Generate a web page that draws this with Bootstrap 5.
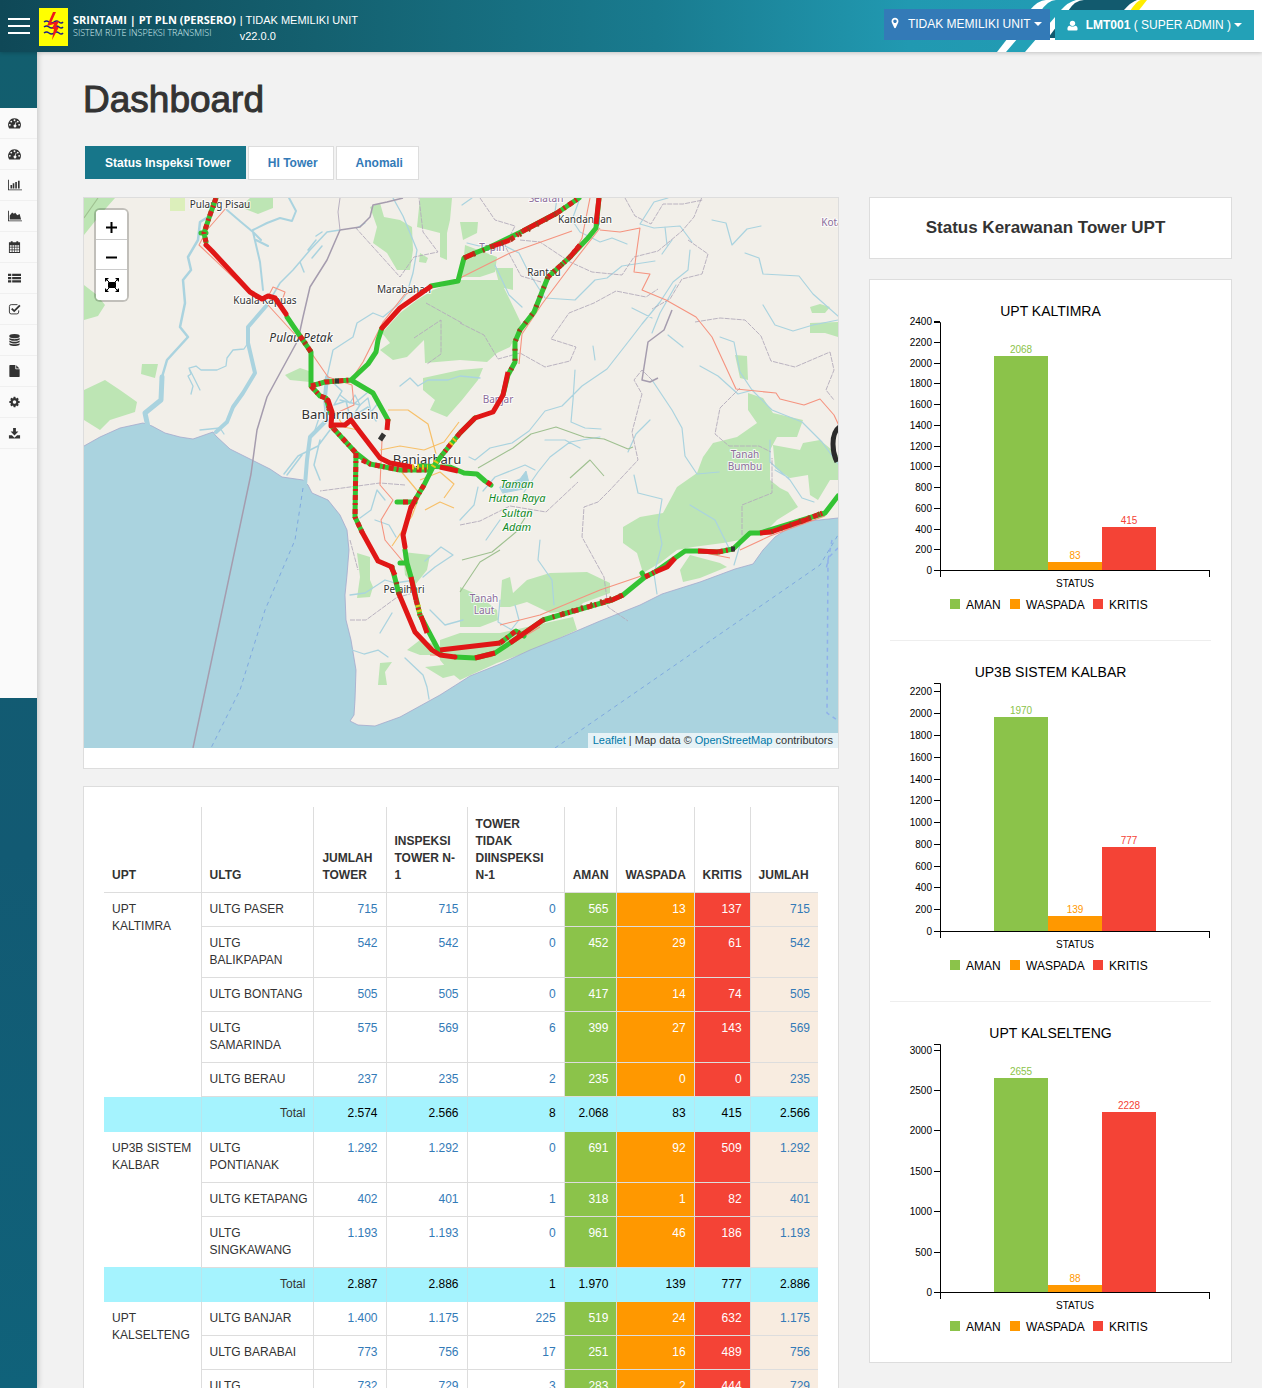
<!DOCTYPE html>
<html lang="id">
<head>
<meta charset="utf-8">
<meta name="viewport" content="width=device-width, initial-scale=1">
<title>Srintami - Dashboard</title>
<link href="https://cdn.jsdelivr.net/npm/bootstrap@5.3.0/dist/css/bootstrap.min.css" rel="stylesheet">
<style>
:root{--aman:#8bc34a;--waspada:#ff9800;--kritis:#f44336;--line:#ddd;--link:#337ab7}
body{font-family:"Liberation Sans",Arial,sans-serif;font-size:12px;line-height:17px;color:#333;background:#f2f2f2}
a{color:var(--link);text-decoration:none}
.topbar{height:52px;background:linear-gradient(90deg,#0f4857 0,#14606f 25%,#197b8f 52%,#2199b1 72%,#239fb7 100%);box-shadow:0 1px 4px #0003;z-index:5}
.swoosh{position:absolute;right:0;top:0;height:52px;width:272px}
.burger{width:22px;height:16px;border:0;background:none;padding:0;display:flex;flex-direction:column;justify-content:space-between}
.burger span{height:2px;background:#fff;display:block}
.brand-logo{margin:2px 5px 0 9px}
.brand-words{padding-top:3px}
.brand-title{font:700 11px/15px "Open Sans",sans-serif;color:#fff}
.brand-sub{font:300 9px/11px "Open Sans",sans-serif;color:#d8f1f5}
.unit-info{font-size:11px;line-height:16px;color:#fff}
.top-btn{border:0;border-radius:0;color:#fff;font-size:12px;line-height:17px}
.top-btn:hover{color:#fff}
.btn-unit{background:#337ab7;padding:0 8px 1px 6px;height:31px;margin:0 5px 3px 0}
.btn-user{background:#23a1b7;padding:0 12px;height:30px;margin-bottom:2px}
.caret{border:4px solid transparent;border-top-color:#fff;border-bottom:0;margin-left:3px}
.shell{height:calc(100vh - 52px)}
.side{width:37px;background:linear-gradient(#125e6e,#125a73 60%,#10627a);padding-top:56px;box-shadow:1px 0 6px #0003;flex:none;z-index:2}
.side ul{background:#fafafa;height:590px}
.side li{height:31px;border-bottom:1px solid #f0f0f0}
.side a{display:flex;align-items:center;padding-left:8px;height:29px}
.side svg{fill:#333}
.content{padding:0 30px 0 46px;overflow-y:auto;scrollbar-width:none}
h1{font-size:37px;line-height:40px;font-weight:400;-webkit-text-stroke:1px #333;margin:28px 0 26px}
.tab-list{gap:2px;padding-left:2px;margin-bottom:17px}
.tab-list a{background:#fff;border:1px solid var(--line);font-weight:700;padding:8px 15px 7px 19px}
.tab-list a.active{background:#17768a;border-color:#17768a;color:#fff;height:33px;padding-right:14px}
.split{--bs-gutter-x:30px}
.panel{background:#fff;border:1px solid var(--line)}
.map-panel{padding-bottom:20px;margin-bottom:17px}
.map-box{height:550px;position:relative;overflow:hidden}
.map-box>svg{width:100%;height:100%;display:block}
.map-tools{position:absolute;left:12px;top:12px;width:31px;border-radius:4px;box-shadow:0 0 0 2px #0003;overflow:hidden;background:#fff}
.map-tools button{height:30px;border:0;border-bottom:1px solid #ccc;background:#fff;width:100%;padding:5px 0 0;display:flex;align-items:center;justify-content:center}
.map-tools button:last-child{border:0;padding:0}
.credit{position:absolute;right:0;bottom:0;background:#ffffffb3;padding:0 5px;font-size:11px;line-height:15px}
.credit a{color:#0078a8}
.m{font-family:"Noto Sans",sans-serif;text-anchor:middle;fill:#333;font-size:10px;paint-order:stroke;stroke:#fffc;stroke-width:2px}
.m .city{font-size:13px}.m .reg{fill:#8b6d9b}.m .park{fill:#138a27;font-style:italic;font-size:11px}
.data-panel{padding:20px}
.data-table{width:100%;table-layout:fixed}
.data-table th,.data-table td{padding:8px;border:0 solid var(--line);border-width:0 0 1px 1px;vertical-align:top}
.data-table th{vertical-align:bottom;padding-top:9px}
.data-table tr>:first-child.upt,.data-table th:first-child{border-left:0}
.data-table td{text-align:right}
.data-table td.nm,.data-table .upt{text-align:left;padding-right:4px}
.data-table td.upt{border-bottom:0}
.ca{background:var(--aman)}.cw{background:var(--waspada)}.ck{background:var(--kritis)}.cj{background:#f8ece0}
.ca a,.cw a,.ck a{color:#fff}
.sum td{background:#a5f3fe;height:35px;color:#000}
.data-table .sum td{border-left-color:#b9e6ee;border-bottom:0}
.sum td:nth-child(2){color:#333}
.kw-title{font-size:17px;line-height:20px;font-weight:700;padding:20px 10px 20px 0;margin:0 0 20px;text-align:center}
.chart-panel{padding:20px;margin-bottom:25px}
.chart-panel svg{display:block;width:100%;height:auto}
.chart-panel hr{margin:20px 0;border-color:#bbb}
.chart-panel text{font-family:"Liberation Sans",Arial,sans-serif;font-size:10px}
.chart-panel .t{font-size:14px}.chart-panel .l{font-size:12px}
</style>
<script src="https://cdn.jsdelivr.net/npm/bootstrap@5.3.0/dist/js/bootstrap.bundle.min.js"></script>
</head>
<body class="overflow-hidden">
<svg width="0" height="0" class="position-absolute">
<symbol id="i-dash" viewBox="0 0 14 14"><path fill-rule="evenodd" d="M7 2a7 7 0 0 0-5.9 10.600q.2.4.7.4h10.400q.5 0 .7-.4A7 7 0 0 0 7 2zM7 3a1 1 0 1 1 0 2 1 1 0 0 1 0-2zM3.500 4.500a1 1 0 1 1 0 2 1 1 0 0 1 0-2zM2 8a1 1 0 1 1 0 2 1 1 0 0 1 0-2zM12 8a1 1 0 1 1 0 2 1 1 0 0 1 0-2zM10.500 4.500a1 1 0 1 1 0 2 1 1 0 0 1 0-2zM8.400 5.600l.7.2-.8 3a1.500 1.500 0 1 1-.8-.2z"/></symbol>
<symbol id="i-bar" viewBox="0 0 2048 1792"><path d="M600 896v512h-240v-512zM930 640v768h-240V640zM2048 1536v128H0V128h128v1408zM1300 448v960h-240V448zM1700 256v1152h-240V256z"/></symbol>
<symbol id="i-area" viewBox="0 0 2048 1792"><path d="M2048 1536v128H0V128h128v1408zM1700 600l220 808H256V832l350-450 250 200 200-150 300 350z"/></symbol>
<symbol id="i-cal" viewBox="0 0 14 14"><path fill-rule="evenodd" d="M1 2h2V.8h2V2h4V.8h2V2h2v11.500H1zM2 5v1.800h2V5zm2.800 0v1.800h1.900V5zm2.600 0v1.800h2V5zm2.600 0v1.800h2V5zM2 7.600v2h2v-2zm2.800 0v2h1.900v-2zm2.600 0v2h2v-2zm2.600 0v2h2v-2zM2 10.400v2h2v-2zm2.800 0v2h1.900v-2zm2.600 0v2h2v-2zm2.600 0v2h2v-2z"/></symbol>
<symbol id="i-list" viewBox="0 0 14 14"><path d="M0 2.500h3.500v2.400H0zM4.500 2.500H14v2.400H4.500zM0 6h3.500v2.400H0zM4.500 6H14v2.400H4.500zM0 9.500h3.500v2.400H0zM4.500 9.500H14v2.400H4.500z"/></symbol>
<symbol id="i-check" viewBox="0 0 14 14"><path d="M11.500 8.500v1.800a2 2 0 0 1-2 2h-6a2 2 0 0 1-2-2v-6a2 2 0 0 1 2-2h6.700" fill="none" stroke="#333"/><path d="M4 6.500l2.700 2.700L12.800 3" fill="none" stroke="#333" stroke-width="2"/></symbol>
<symbol id="i-db" viewBox="0 0 1792 1792"><path d="M896 768q237 0 443-43t325-127v170q0 69-103 128t-280 93.500-385 34.500-385-34.500-280-93.500-103-128v-170q119 84 325 127t443 43zm0 768q237 0 443-43t325-127v170q0 69-103 128t-280 93.500-385 34.500-385-34.500-280-93.500-103-128v-170q119 84 325 127t443 43zm0-384q237 0 443-43t325-127v170q0 69-103 128t-280 93.500-385 34.500-385-34.500-280-93.500-103-128v-170q119 84 325 127t443 43zm0-1152q208 0 385 34.500t280 93.500 103 128v128q0 69-103 128t-280 93.500-385 34.500-385-34.500-280-93.500-103-128v-128q0-69 103-128t280-93.500 385-34.500z"/></symbol>
<symbol id="i-file" viewBox="0 0 1792 1792"><path d="M1152 512v-472q22 14 36 28l408 408q14 14 28 36h-472zm-128 32q0 40 28 68t68 28h544v1056q0 40-28 68t-68 28h-1344q-40 0-68-28t-28-68v-1600q0-40 28-68t68-28h800v544z"/></symbol>
<symbol id="i-gear" viewBox="0 0 1792 1792"><path d="M1152 896q0-106-75-181t-181-75-181 75-75 181 75 181 181 75 181-75 75-181zm512-109v222q0 12-8 23t-20 13l-185 28q-19 54-39 91 35 50 107 138 10 12 10 25t-9 23q-27 37-99 108t-94 71q-12 0-26-9l-138-108q-44 23-91 38-16 136-29 186-7 28-36 28h-222q-14 0-24.500-8.500t-11.500-21.500l-28-184q-49-16-90-37l-141 107q-10 9-25 9-14 0-25-11-126-114-165-168-7-10-7-23 0-12 8-23 15-21 51-66.500t54-70.500q-27-50-41-99l-183-27q-13-2-21-12.500t-8-23.500v-222q0-12 8-23t19-13l186-28q14-46 39-92-40-57-107-138-10-12-10-24 0-10 9-23 26-36 98.500-107.500t94.500-71.500q13 0 26 10l138 107q44-23 91-38 16-136 29-186 7-28 36-28h222q14 0 24.500 8.500t11.500 21.500l28 184q49 16 90 37l142-107q9-9 24-9 13 0 25 10 129 119 165 170 7 8 7 22 0 12-8 23-15 21-51 66.500t-54 70.500q26 50 41 98l183 28q13 2 21 12.500t8 23.500z"/></symbol>
<symbol id="i-down" viewBox="0 0 14 14"><path d="M5.500 1.500h3v4h2.700L7 9.700 2.800 5.500h2.700zM1 9.500h3.200L7 12l2.800-2.500H13v3.300H1z"/></symbol>
<symbol id="i-pin" viewBox="0 0 1792 1792"><path d="M1152 640q0-106-75-181t-181-75-181 75-75 181 75 181 181 75 181-75 75-181zm256 0q0 109-33 179l-364 774q-16 33-47.500 52t-67.500 19-67.500-19-46.500-52l-365-774q-33-70-33-179 0-212 150-362t362-150 362 150 150 362z"/></symbol>
<symbol id="i-user" viewBox="0 0 14 14"><circle cx="7" cy="4.200" r="3.400"/><path d="M2 13.500q-1.500 0-1.500-2 0-4 3-4.300Q7 9.500 10.500 7.200q3 .3 3 4.300 0 2-1.500 2z"/></symbol>
</svg>

<header class="topbar position-relative d-flex align-items-center">
  <svg class="swoosh" viewBox="990 0 272 52">
    <path fill="#fff" d="M997 52L1029 11Q1038 0 1046 0H1262V52z"/>
    <path fill="#23a1b7" d="M1006 52L1040 12Q1048 0 1056 0H1076Q1068 2 1061 10L1025 52z"/>
    <path fill="#125a6e" d="M1048 38L1068 11Q1075 0 1084 0H1137Q1131 2 1124 10L1100 38z"/>
    <path fill="#ffed00" d="M1128 14Q1137 0 1141 0H1147L1136 14z"/>
  </svg>
  <div class="d-flex align-items-center position-relative w-100 ps-2">
    <button class="burger" aria-label="Menu"><span></span><span></span><span></span></button>
    <svg class="brand-logo" width="29" height="38" viewBox="0 0 29 38">
      <path fill="#ff0" d="M0 0h29v38H0z"/>
      <g fill="none" stroke="#1b1f8a" stroke-width="1.500"><path d="M5 14q2.500-2 5 0t5 0 5 0 4 0M5 19q2.500-2 5 0t5 0 5 0 4 0M5 25q2.500-2 5 0t5 0 5 0 4 0"/></g>
      <path fill="#f01818" d="M14 4h3l-5 11 8-2-3 6h3l-7 13 2-11h-2l2-5-7 2z"/>
    </svg>
    <div class="me-auto d-flex brand-words">
      <div><div class="brand-title">SRINTAMI | PT PLN (PERSERO)</div><div class="brand-sub">SISTEM RUTE INSPEKSI TRANSMISI</div></div>
      <div class="unit-info ps-1">| TIDAK MEMILIKI UNIT<br>v22.0.0</div>
    </div>
    <button class="btn top-btn btn-unit d-flex align-items-center"><svg width="10" height="14" viewBox="3 0 8 14" fill="#fff" class="me-2"><use href="#i-pin" width="14" height="12"/></svg>TIDAK MEMILIKI UNIT<span class="caret"></span></button>
    <button class="btn top-btn btn-user d-flex align-items-center me-2"><svg width="11" height="11" fill="#fff" class="me-1"><use href="#i-user"/></svg><span class="ms-1"><b>LMT001</b> ( SUPER ADMIN )</span><span class="caret"></span></button>
  </div>
</header>

<div class="shell d-flex">
<nav class="side" aria-label="Menu utama">
  <ul class="list-unstyled m-0">
    <li><a href="#" aria-label="Dashboard"><svg width="13" height="14"><use href="#i-dash"/></svg></a></li>
    <li><a href="#" aria-label="Dashboard 2"><svg width="13" height="14"><use href="#i-dash"/></svg></a></li>
    <li><a href="#" aria-label="Grafik"><svg width="14" height="14"><use href="#i-bar"/></svg></a></li>
    <li><a href="#" aria-label="Area"><svg width="14" height="14"><use href="#i-area"/></svg></a></li>
    <li><a href="#" aria-label="Jadwal"><svg width="13" height="14"><use href="#i-cal"/></svg></a></li>
    <li><a href="#" aria-label="Daftar"><svg width="13" height="14"><use href="#i-list"/></svg></a></li>
    <li><a href="#" aria-label="Persetujuan"><svg width="13" height="14"><use href="#i-check"/></svg></a></li>
    <li><a href="#" aria-label="Data"><svg width="13" height="12"><use href="#i-db"/></svg></a></li>
    <li><a href="#" aria-label="Berkas"><svg width="13" height="12"><use href="#i-file"/></svg></a></li>
    <li><a href="#" aria-label="Pengaturan"><svg width="13" height="12"><use href="#i-gear"/></svg></a></li>
    <li><a href="#" aria-label="Unduh"><svg width="13" height="14"><use href="#i-down"/></svg></a></li>
  </ul>
</nav>
<main class="content flex-grow-1">
  <h1>Dashboard</h1>
  <nav class="tab-list d-flex align-items-start"><a class="active" href="#">Status Inspeksi Tower</a><a href="#">HI Tower</a><a href="#">Anomali</a></nav>
  <div class="row split">
  <div class="col-8">
    <section class="panel map-panel"><div class="map-box">
<svg viewBox="84 198 754 550" preserveAspectRatio="xMidYMid slice" fill="none" stroke-linejoin="round">
<path fill="#f2efe9" d="M84 198h754v550H84z"/>
<g fill="#bde5b4">
<path d="M84 198h31l-15 17-16 20zM84 285l13 10 8 10-7 11-14 4zM250 198h23v10l-15 6-18-7zM142 364h16l-3 14-14-4zM84 390l21-10 15 10 17 12-2 10-25 8-10 10-16-10zM285 375l15-7 12 4-2 10-20-2zM370 207l10-4 4 14 16 3 12 7 1 23-3 20h-13l-10-17-14-10 4-16zM420 198h32l-2 22-3 13v27l-7-3v-24l-23-6zM420 253l8 5-2 5-7-1z"/>
<path d="M417 300l16-10 27-10h40l10 20 11 23-4 10-7 14-13 6-10 9-27-2-35 3-1-23-17 17-14 3-13-10 10-7-8-10 18-20zM465 245l32 12-2 15-15 5h-18zM495 268h18v22l-13-3zM460 222h18l-1 11-14 7zM423 378l37-8 23-2-5 12-16 20-15 17-17-7 5-10-12-10z"/>
<path d="M748 393l15 5 10 15 30 7-6 17h-20l-7 13v30l10 8 8 4 10 15-21 13-10 10-27 10-17 3-30 4-16 3-17 13-17 10-6-20-14-10v-16l17-10 23-4 14-26 20-14 6-16 10-14 24-6 20-14-9-13z"/>
<path d="M773 445l27 5 3-7 17-3 18 15v25l-8 0-12 20-8-5-2-20-18 3-15-10zM735 355l12 1 1 24-8-2zM810 307l10-3 10 3-5 6h-13zM810 323l28-1v15l-13-4h-15z"/>
<path d="M502 580l8-3 3 16 14-13 23-7 37-1 23 11v10l-27 10-6 7-27 3-23-11-17 5h-10zM460 587l18 8 19 15 1 10-18 7h-20zM440 640l20-7h40l27-6 46-10 4 13-44 20-36 13-37 17-10-8-10-12zM407 650l13-10 17 5 3 10h-20zM425 667l18-2 14-3-2 13-12 3zM357 553l13 4v23l3 7-3 10-13 1 3-21zM403 552l27 3-3 15-12 15-10-10zM380 663l12-1-7 10 2 13h-9zM690 555l30 8 7 4-27 11-17 4-3-12z"/></g>
<path fill="#dcefbb" d="M170 198h15v13h-15z"/>
<path fill="#aad3df" stroke="#a4a8cc" stroke-width=".8" d="M80 448l4-2 16-9 20-9 23-5 9 3 13 7 15 4 13 2 20-7 3 4 14 13 20 10 20 10 12 8 21 3 5 5 4 8 16 7 12 15 7 15 2 20-2 25-2 20 1 25 5 20 5 30-1 30-1 15-4 6 8 4 17 1 25-9 20-11 20-11 19-12 11-7 30-12 30-14 30-12 40-17 40-16 22-11 38-12 35-13 18-5 10-14 12-13 15-10 20-6 28-3 4 0V752H80z"/>
<g stroke="#aad3df" stroke-linecap="round">
<path stroke-width="2.500" d="M208 217l-8 5-2 18-10 17 3 13-8 10 2 23-5 24 8 10-21 23-5 17"/><path stroke-width="5" d="M162 377l-1 23-16 13 3 14"/>
<path stroke-width="4" d="M267 305l-19 22v16l7 30-12 20-10 14-6 15-11 10"/><path stroke-width="2" d="M263 290l-3-28-7-30-12-10-14-12M253 230l14-7 13-5 12 3 4-10-8-15M253 232l8 8M256 240l12 6"/><path stroke-width="1.500" d="M340 230l-13 2-17 18-17 20-13 13-13 22M308 250l8-10M312 258l10-12M300 262l4 10M316 236l6-4"/>
<path stroke-width="1.300" d="M248 343l-4 6-11 1-6 8-1 8-9 4-16 0-5-4-7 2 2 6-3 2 5 10-2 8M327 377l6-27 20-13 4-14 16-10 10 4 17-14 7-10 6-20 4-23-14-34-10-18M357 228l8-5M400 386l10-8 8 8 10-6 20 0 12-4 20 2"/>
<path stroke-width="4" d="M327 377l-2 20 2 23-17 17-3 23-2 25"/>
<path stroke-width="1.500" d="M327 377l15 14-8 14 12-4 4 16M340 400l20 5-8 12 16-10 8 14M355 403l12-10M330 430l-12 16-20 10-14 18M320 440l-6 25 6 15M302 455l-15 20"/>
<path stroke-width="1.300" d="M340 395l10 8 5-8 5 10 8-7 3 14 8-10M385 500l-8-10-6 20-11 8M375 520l14 5 7 12M350 595l15-2 20-13 10 3 20-3M423 577l12-10 18-12-12-8-16 14M352 650l12 4 14-4 10 7M405 658l18 17 4 12 2 12M392 613l-12 20M430 610l15 15 18-5M320 415l-5 15M190 370l10 20M200 430l20-2 4 6"/>
<path stroke-width="1.200" d="M495 265l14 30 13 12M462 205l10-7M467 243l12 3 20-3 20 10 10 20 16 25 30 2 20-20 12-2 15-12 20-3 13-2M557 198l-2 14M580 198l-8 22 8 12 20 10 12-4 15 6M640 224l14-22 14-4M640 224l14 4 26-2 12 16M665 227l2 18M712 220l14 3 6 22 15-16 14-3M745 253l14 5 4 16 36 2 14 18 25 22M838 320l-25 5-20 6-18-6-12-20M690 250l-2 20-15 12-13 20-18 22-10 13-25 32-25 17-20 20-17 5-16 20-17 12-22 5-15 12-6-3M575 370l-2 30-2 22 14 6 16 1M595 360l-2-14M632 308l20 10M672 240l-10 14M676 285l-16 28-8 20M668 335l15 12M652 380l20 30 10 18 3 28 12 18 22-2M650 420l-14 14-8 18M700 366l18 10 20 18 15-4M720 337l14 5 6 30 12 18 20 20 30 12 20 20 16 22"/>
<path stroke-width="1.200" d="M600 437l-30 5-20 15-12 15-14 20M545 440l20 0 15 8M535 470l-10-5-30 12-12 14M634 475l4 18 24 6-4 25 4 20-8 30 3 20M690 505l25 15 14 28M740 545l-6 20M540 540l-2 20 14 20 2 25M500 600l-2 22 14 8M515 605l4 15-8 10M770 440l0 22 20 18 12 18 12 4M460 520l14-15 4-18M500 520l-14 20M775 470l14 8"/>
<path fill="#aad3df" d="M500 487l20-8 6-8 3 12-6 6-20 4z"/></g>
<g stroke="#b3acbb" stroke-width=".9" stroke-dasharray="5 1"><path d="M355 227l45 50 14-20 24-5-15-20-4-34M414 338l12-8 15-10v34l-14 10M426 303l36 20M460 323l24 12 14 24 22-6 25 14 25-6 6-14-25-8 18-26 25-10 22-12 30 6 12-8M480 198l15 22 20 6-10 20 16 30 20 6M520 240l20 2 30 20 22 10 30 3 12-18 24-6 24-20 12-14 14-35M625 198l10 18 16 8 12-20 20 0 20-4M688 240l20 14-6 20-20 5-12 20-18 10M695 322l25-4 25 2 16 16 10 25 24 6 35-15 4 18-8 20 8 10M740 388l-20 20-5 26 14 12 30 0 12 6M652 380l-10-10-8 10 8 14-10 38 6 28-28 30-12 12-14 5-2 30 22 40 4 30 20 14M742 535l0-30 30-12 0-35M460 525l20-4 30-15 36 6 32-30M405 485l-25-2-60 8M350 620l16 0 30-22 20-6M350 540l8 30"/></g>
<path stroke="#a59cae" stroke-width="1.500" d="M403 198l-16 4-14 3-3 12-10 10-20 3-13 30-17 27-7 30-5 23-18 33-13 24-10 33-6 44-58 274M672 310l-8 20-16 12-6 38 8 2 8-4"/>
<path stroke="#b9b0c0" d="M340 230l-2-18 2-14"/>
<g stroke="#9fc090" stroke-width="1.100"><path d="M84 218l14-20M478 468l35-20 18-14 25-7 28 10 20 2 24 10 5-2M570 478l20-18 14 16M462 560l30-8 24-20 14-22M460 592l20-30 20-12"/></g>
<g stroke="#f5937f" stroke-width="1.100"><path d="M233 200l-26 30-8 15 55 52 14 0 5-10 12 5-4 12M268 305l42 46 18 26 24 8 2 20-22 10M351 380l12-18 20-40 22-28 30-7 25-9 50-25 62-22M600 230l20 2 20-4-4 28-2 16 16 2-8 16 24 10 30 17 16 20 12 26 12 26 40 4 4 6 24 6 16-6 14 16 12 26M600 228l-28 36-30 40-20 30-3 30M382 440l-2 45 13 15-12 20 4 20 20 24 6 20 10 30M500 625l40-10 60-25 50-17 40-23 40 8M740 550l30-14 55-20M430 655l60 2 50-30M590 198l-8 40-12 22"/></g>
<g stroke="#f7c06a" stroke-width="1.200"><path d="M330 405l14 22 14 3M388 410l20 0 20 14 8 30M380 450l20-4 24 4 20-8 15-20M400 470l20 24-8 22-20 30M425 510l15-8 14 6M420 480l20-8 14 12-10 14"/></g>
<g stroke="#7fa9e0" stroke-dasharray="4 4"><path d="M303 488l-8 52-30 70-25 80-29 58M555 748l265-183 18-30"/><path stroke-width="1.500" stroke="#8fb0ea" d="M838 548l-10 10-1 155 10 7M832 540l-6 30"/></g>
<g class="m"><text x="220" y="208">Pulang Pisau</text><text x="265" y="304">Kuala Kapuas</text><text x="404" y="293">Marabahan</text><text x="544" y="276">Rantau</text><text x="585" y="223">Kandangan</text><text class="reg" x="546" y="202">Selatan</text><text class="reg" x="492" y="251">Tapin</text><text class="reg" x="498" y="403">Banjar</text><text x="404" y="593">Pelaihari</text><text class="reg" x="745" y="458">Tanah</text><text class="reg" x="745" y="470">Bumbu</text><text class="reg" x="484" y="602">Tanah</text><text class="reg" x="484" y="614">Laut</text><text class="reg" x="832" y="226">Kota</text>
<text x="301" y="342" font-style="italic" style="font-size:12px">Pulau Petak</text><text class="city" x="340" y="419">Banjarmasin</text><text class="city" x="427" y="464">Banjarbaru</text>
<text class="park" x="517" y="488">Taman</text><text class="park" x="517" y="502">Hutan Raya</text><text class="park" x="517" y="517">Sultan</text><text class="park" x="517" y="531">Adam</text></g>
<g stroke-width="5">
<g stroke="#34c334" stroke-linecap="round"><path d="M216 198l-6 17-6 18 2 9M201 233h5M287 317l13 19 11 16v34l14-4 26-2M311 386l9 10 6 2 5 16M351 380l17-16 8-12 2-12 4-12M431 286l27-5 6-23 11-5 15-6 33-16 34-18 22-15M351 380l22 13 15 27M599 198l-3 30-8 10-18 19-22 20-8 20-6 15-14 18-5 12v20l-7 13-5 20M475 418l-15 15-18 22-9 12-9 18-9 15M333 428l23 25 14 11 30 6 30 0M420 466l30 1 14 6 13 1 8 7 6 4M356 453l-1 64 7 15M392 567l7 27M455 657l20 1 20-5 15-10 33-23 17-5 52-15 11-5 22-18 10-5 20-14 10-7 13 0 20 1 15-3 17-16h10l65-20 13-17M644 576l-2-3M405 550l2 13 4 14 9 38 20 38M400 563h6M500 643l16-12 8 5M397 502h18"/></g>
<g stroke="#e01616"><path stroke-linecap="round" d="M206 245l6 6 38 41 12 7 6-3 7 2 11 16M331 425l14 0 6-5 9 12 20 26 10 5 22 4M328 400l4 12-1 14M382 328l18-20 30-21M411 507l-8 28 2 12M362 532l16 29 14 6M399 594l16 38 17 18 8 5 15 2"/><path d="M464 258l11-5M490 247l20-7M523 231l34-18M388 419l-1 11M599 198l-3 26M508 372l-5 23-10 17-18 6-15 15M440 467l18 4M391 567l4 8M475 658l20-5M510 643l33-23M605 601l7-1 11-5M655 572l12-5 8-9M698 551l20 1M760 533l11-1 40-14M415 500l-4 8M411 577l5 23M421 616l6 17M440 650l60-7M580 245l-10 12M487 482l4 3"/></g>
<g stroke="#d6201c" stroke-dasharray="5 3 2 4"><path d="M216 198l-6 17-6 18 2 9M300 336l11 16M311 386l14-4 26-2M311 386l9 10 6 2 5 16M510 240l13-9M557 213l22-15M580 245l-10 12-22 20M460 433l-18 22M333 428l23 25M362 460l8 4 30 6 30 0M356 453l-1 64 7 15M560 615l52-15M645 577l10-5M718 552l15-3M800 522l25-10M424 485l-9 15M416 600l4 15M500 643l16-12 8 5M403 502h8"/></g>
<g stroke="#a03c1c" stroke-dasharray="2 8"><path d="M570 257l-22 20-8 20-6 15-14 18-5 12v20l-7 13M464 258l46-18 47-27M399 594l-4-18M311 352l-9-14M543 620l80-25M771 532l54-20"/></g>
<path stroke="#e8c61a" stroke-dasharray="2 3" d="M412 467h16M455 439l-6 7M418 605l2 8M433 467l5-8"/>
<path stroke="#333" d="M384 434l-4 6M335 381h4M731 549h4"/></g>
<path d="M841 426q-8 4-8 18 0 10 4 18" stroke="#2b2b2b" stroke-width="5"/>
</svg>
      <div class="map-tools">
        <button aria-label="Zoom in"><svg width="13" height="13"><path d="M6.500 1v11M1 6.500h11" stroke="#000" stroke-width="2"/></svg></button>
        <button aria-label="Zoom out"><svg width="13" height="13"><path d="M1 6.500h11" stroke="#000" stroke-width="2"/></svg></button>
        <button aria-label="Layar penuh"><svg width="14" height="14"><path d="M0 0h4L0 4zM14 0v4l-4-4zM0 14v-4l4 4zM14 14h-4l4-4z"/><path d="M1 1l3 3M13 1l-3 3M1 13l3-3M13 13l-3-3" stroke="#000"/><rect x="3" y="4" width="8" height="6" rx="1"/></svg></button>
      </div>
      <div class="credit"><a href="#">Leaflet</a> | Map data © <a href="#">OpenStreetMap</a> contributors</div>
    </div></section>

    <section class="panel data-panel">
    <table class="data-table">
      <colgroup><col style="width:13.6%"><col style="width:15.800%"><col style="width:10.100%"><col style="width:11.350%"><col style="width:13.600%"><col style="width:7.400%"><col style="width:10.800%"><col style="width:7.850%"><col style="width:9.500%"></colgroup>
      <thead><tr><th>UPT</th><th>ULTG</th><th>JUMLAH TOWER</th><th>INSPEKSI TOWER N-1</th><th>TOWER TIDAK DIINSPEKSI N-1</th><th>AMAN</th><th>WASPADA</th><th>KRITIS</th><th>JUMLAH</th></tr></thead>
      <tbody id="rows"></tbody>
    </table>
    </section>
  </div>
  <div class="col-4">
    <h2 class="panel kw-title">Status Kerawanan Tower UPT</h2>
    <section class="panel chart-panel" id="charts"></section>
  </div>
  </div>
</main>
</div>
<script>
const groups=[
 ['UPT KALTIMRA',[['ULTG PASER','715','715','0','565','13','137','715'],['ULTG BALIKPAPAN','542','542','0','452','29','61','542'],['ULTG BONTANG','505','505','0','417','14','74','505'],['ULTG SAMARINDA','575','569','6','399','27','143','569'],['ULTG BERAU','237','235','2','235','0','0','235']],['2.574','2.566','8','2.068','83','415','2.566']],
 ['UP3B SISTEM KALBAR',[['ULTG PONTIANAK','1.292','1.292','0','691','92','509','1.292'],['ULTG KETAPANG','402','401','1','318','1','82','401'],['ULTG SINGKAWANG','1.193','1.193','0','961','46','186','1.193']],['2.887','2.886','1','1.970','139','777','2.886']],
 ['UPT KALSELTENG',[['ULTG BANJAR','1.400','1.175','225','519','24','632','1.175'],['ULTG BARABAI','773','756','17','251','16','489','756'],['ULTG','732','729','3','283','2','444','729']],null]];
const cls=['nm','','','','ca','cw','ck','cj'];
let h='';
for(const [upt,rows,sum] of groups){
 rows.forEach((r,i)=>{h+='<tr>'+(i?'':`<td class="upt" rowspan="${rows.length}">${upt}</td>`)+r.map((v,k)=>`<td class="${cls[k]}">${k?`<a href="#">${v}</a>`:v}</td>`).join('')+'</tr>'});
 if(sum)h+='<tr class="sum"><td class="upt"></td><td>Total</td>'+sum.map(v=>`<td>${v}</td>`).join('')+'</tr>';
}
document.getElementById('rows').innerHTML=h;

const colors=['#8bc34a','#ff9800','#f44336'];
document.getElementById('charts').innerHTML=[
 ['UPT KALTIMRA',[2068,83,415],200,2400],['UP3B SISTEM KALBAR',[1970,139,777],200,2200],['UPT KALSELTENG',[2655,88,2228],500,3000]
].map(([name,vals,step,top])=>{
 const base=270.5,k=214.5/vals[0];
 let s=`<svg viewBox="0 0 321 320"><text class="t" x="160.5" y="16" text-anchor="middle">${name}</text>`;
 vals.forEach((v,i)=>{const y=Math.round(base-v*k),x=104+54*i;s+=`<rect x="${x}" y="${y}" width="54" height="${270-y}" fill="${colors[i]}"/><text x="${x+27}" y="${y-3}" text-anchor="middle" fill="${colors[i]}">${v}</text>`});
 s+='<path d="M44 22.5h6.5v248h269M44 270.5h7M50.5 270v7M319.500 270v7" fill="none" stroke="#000"/>';
 for(let t=0;t<=top;t+=step){const y=Math.round(base-t*k-.5);s+=`<path d="M44 ${y+.5}h6" stroke="#000"/><text x="42" y="${y+4}" text-anchor="end">${t}</text>`}
 s+='<text x="185" y="287" text-anchor="middle">STATUS</text>';
 [['AMAN',60],['WASPADA',120],['KRITIS',203]].forEach(([n,x],i)=>{s+=`<rect x="${x}" y="299" width="10" height="10" fill="${colors[i]}"/><text class="l" x="${x+16}" y="309">${n}</text>`});
 return s+'</svg>';
}).join('<hr>');
</script>
</body>
</html>
